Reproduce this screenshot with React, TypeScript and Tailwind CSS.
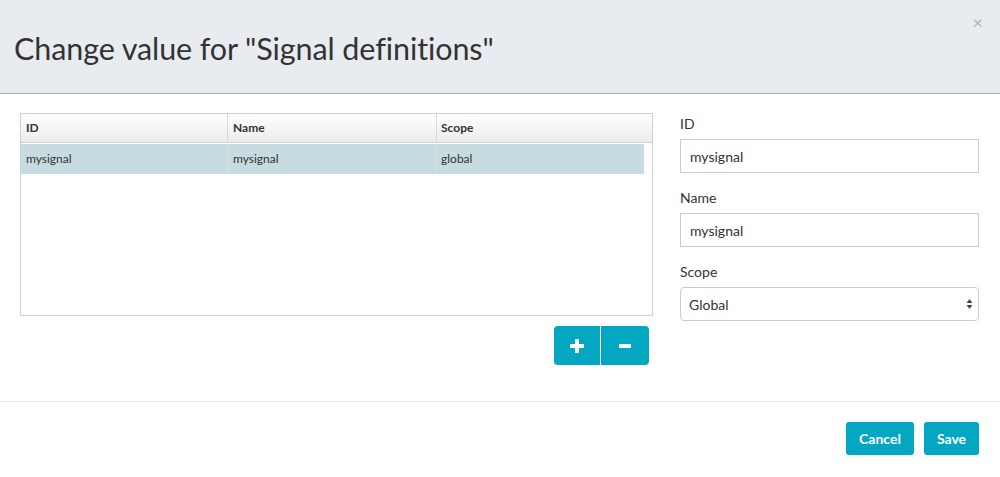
import React from "react";

export default function App() {
  const font = { fontFamily: "Lato, 'Open Sans', sans-serif" };
  return (
    <div className="w-[1000px] h-[477px] bg-white text-[#333]" style={font}>
      {/* Header */}
      <div className="relative h-[94px] bg-[#e8ecf0] border-b border-[#a9b0b6] pl-[14px] flex items-center">
        <h1 className="text-[30.5px] leading-none text-[#333] tracking-[-0.1px] pt-[4px]">
          Change value for "Signal definitions"
        </h1>
        <span className="absolute right-[17px] top-[13px] text-[#b0b4b8] text-[18px] leading-none">
          ×
        </span>
      </div>

      {/* Body */}
      <div className="flex pl-[20px] pr-[21px] pt-[19px] gap-[27px] h-[308px] border-b border-[#e5e5e5]">
        <div className="w-[633px] flex flex-col">
          <div className="h-[203px] border border-[#cfcfcf] relative">
            <div className="flex h-[29px] border-b border-[#d4d4d4] bg-gradient-to-b from-[#ffffff] to-[#ececec] text-[12px] font-bold text-[#333]">
              <div className="w-[207px] border-r border-[#d8d8d8] pl-[5px] flex items-center">ID</div>
              <div className="w-[209px] border-r border-[#d8d8d8] pl-[5px] flex items-center">Name</div>
              <div className="flex-1 pl-[4px] flex items-center">Scope</div>
            </div>
            <div className="flex h-[30px] mt-[1px] mr-[8px] bg-[#c6dce0] text-[12px] text-[#333]">
              <div className="w-[207px] border-r border-[#d6dfe1] pl-[5px] flex items-center">mysignal</div>
              <div className="w-[209px] border-r border-[#d6dfe1] pl-[5px] flex items-center">mysignal</div>
              <div className="flex-1 pl-[4px] flex items-center">global</div>
            </div>
          </div>
          <div className="flex justify-end mt-[10px] pr-[4px]">
            <div className="flex rounded-[4px] overflow-hidden">
              <button className="w-[47px] h-[39px] bg-[#03a7c1] text-white flex items-center justify-center border-r border-white">
                <svg width="14" height="14" viewBox="0 0 14 14">
                  <rect x="5" y="0" width="4" height="14" fill="white" />
                  <rect x="0" y="5" width="14" height="4" fill="white" />
                </svg>
              </button>
              <button className="w-[48px] h-[39px] bg-[#03a7c1] text-white flex items-center justify-center">
                <svg width="12" height="4" viewBox="0 0 12 4">
                  <rect x="0" y="0" width="12" height="4" fill="white" />
                </svg>
              </button>
            </div>
          </div>
        </div>

        <div className="w-[299px] flex flex-col">
          <label className="text-[14px] leading-[20px] text-[#333] mt-[1px]">ID</label>
          <div className="mt-[5px] h-[34px] border border-[#cccccc] flex items-center pl-[9px] text-[14px] text-[#333]">
            mysignal
          </div>
          <label className="text-[14px] leading-[20px] text-[#333] mt-[15px]">Name</label>
          <div className="mt-[5px] h-[34px] border border-[#cccccc] flex items-center pl-[9px] text-[14px] text-[#333]">
            mysignal
          </div>
          <label className="text-[14px] leading-[20px] text-[#333] mt-[15px]">Scope</label>
          <div className="mt-[5px] h-[34px] border border-[#cccccc] rounded-[4px] flex items-center pl-[8px] pr-[5px] text-[14px] text-[#333] justify-between">
            <span>Global</span>
            <svg width="7" height="12" viewBox="0 0 7 12">
              <path d="M3.5 1 L6.5 5 L0.5 5 Z" fill="#444" />
              <path d="M3.5 11 L6.5 7 L0.5 7 Z" fill="#444" />
            </svg>
          </div>
        </div>
      </div>

      {/* Footer */}
      <div className="flex justify-end gap-[10px] pr-[21px] pt-[20px]">
        <button className="w-[68px] h-[33px] rounded-[3px] bg-[#03a7c1] text-white text-[14px] font-bold">
          Cancel
        </button>
        <button className="w-[55px] h-[33px] rounded-[3px] bg-[#03a7c1] text-white text-[14px] font-bold">
          Save
        </button>
      </div>
    </div>
  );
}
